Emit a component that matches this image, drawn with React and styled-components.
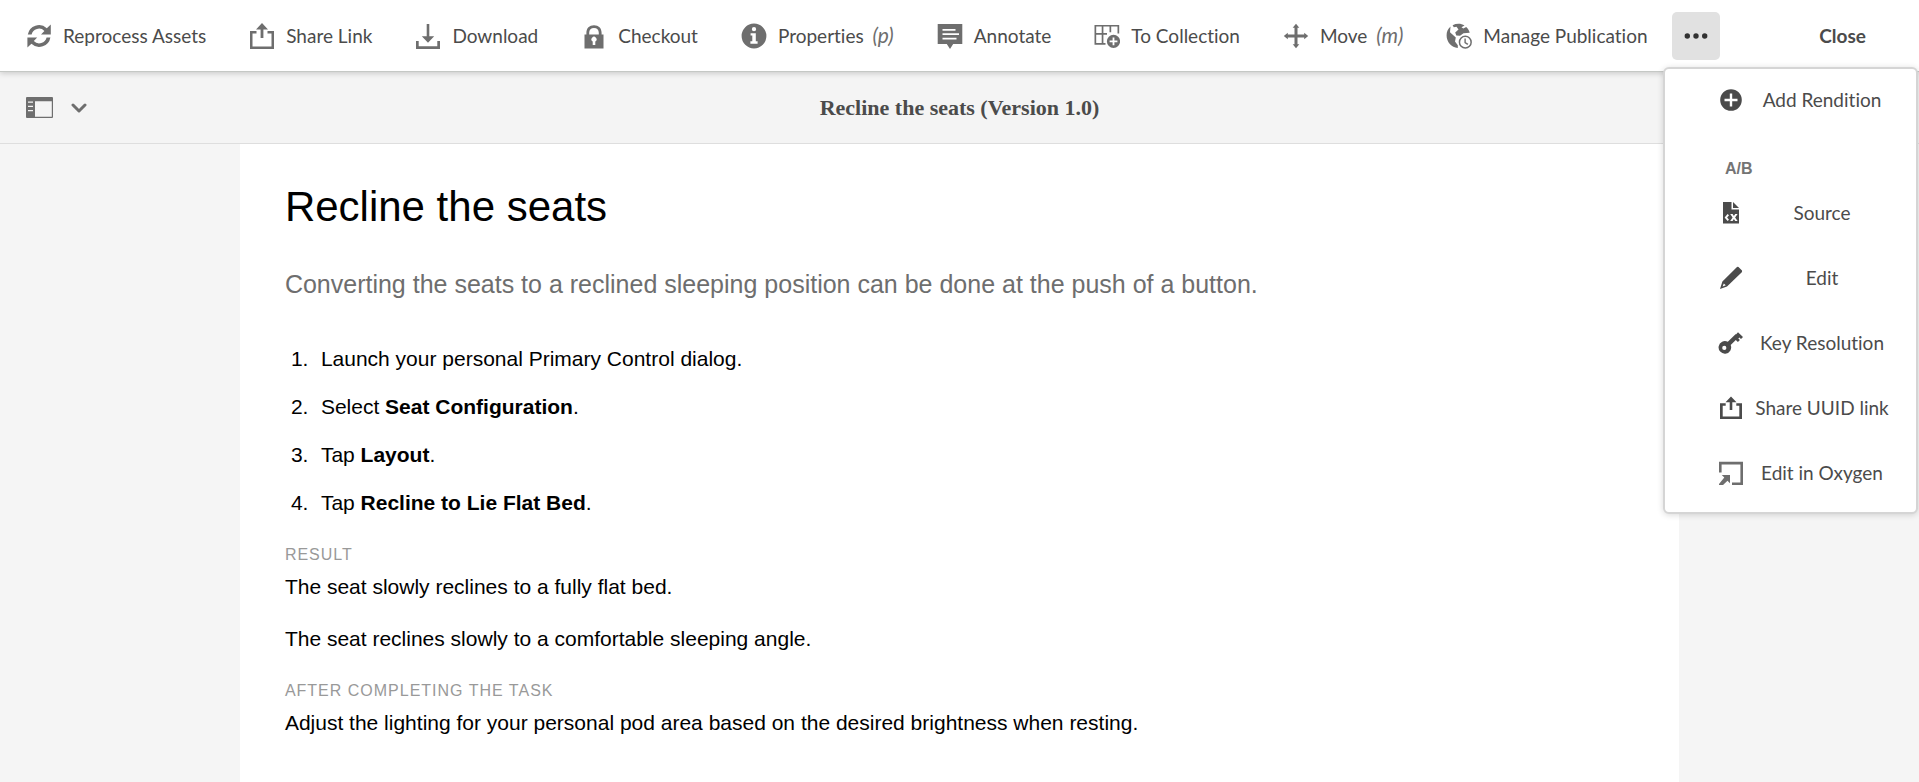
import React from "react";
import styled, { createGlobalStyle } from "styled-components";

const GlobalStyle = createGlobalStyle`
  * { box-sizing: border-box; }
  html, body, #root { min-height: 100vh; }
  body { margin: 0; background: #f5f5f5; font-family: Lato, "Liberation Sans", sans-serif; }
  #root { display: flex; flex-direction: column; }
`;

const Toolbar = styled.header`
  position: relative;
  z-index: 2;
  display: flex;
  align-items: center;
  height: 72px;
  padding: 0 45px 0 26px;
  background: #fff;
  border-bottom: 1px solid #c5c8c5;
  box-shadow: 0 1px 6px rgba(0, 0, 0, 0.2);
`;

const Actions = styled.nav`
  display: flex;
  align-items: center;
  gap: 43px;
`;

const Action = styled.button`
  display: flex;
  align-items: center;
  gap: 11px;
  padding: 0;
  border: 0;
  background: none;
  color: #4b4b4b;
  font: 400 19px/24px Lato, "Liberation Sans", sans-serif;
  font-variant-ligatures: none;
  white-space: nowrap;
  cursor: pointer;
`;

const Glyph = styled.svg`
  flex: none;
  width: 26px;
  height: 26px;
  fill: ${(p) => (p.$dark ? "#4b4b4b" : "#6e6e6e")};
  stroke: none;
`;

const Shortcut = styled.em`
  margin-left: 4px;
  color: #6e6e6e;
  font-size: 21px;
`;

const MoreButton = styled.button`
  display: grid;
  place-items: center;
  width: 48px;
  height: 48px;
  margin-left: 24px;
  padding: 0;
  border: 0;
  border-radius: 5px;
  background: #e1e1e1;
  cursor: pointer;
`;

const CloseButton = styled.button`
  margin-left: auto;
  padding: 8px;
  border: 0;
  background: none;
  color: #4b4b4b;
  font: 700 19px/24px Lato, "Liberation Sans", sans-serif;
  cursor: pointer;
`;

const Menu = styled.ul`
  position: absolute;
  top: 67px;
  right: 1px;
  display: grid;
  gap: 5px;
  width: 255px;
  margin: 0;
  padding: 1px 0 9px;
  list-style: none;
  background: #fff;
  border: 2px solid #d5d5d5;
  border-radius: 6px;
  box-shadow: 0 1px 6px rgba(0, 0, 0, 0.15);
`;

const MenuButton = styled.button`
  display: flex;
  align-items: center;
  gap: 9px;
  width: 100%;
  height: 60px;
  padding: 0 25px 0 53px;
  border: 0;
  background: none;
  color: #4b4b4b;
  font: 400 19px/24px Lato, "Liberation Sans", sans-serif;
  font-variant-ligatures: none;
  white-space: nowrap;
  cursor: pointer;
`;

const MenuLabel = styled.span`
  flex: 1;
  display: flex;
  justify-content: center;
`;

const MenuHeading = styled.li`
  height: 43px;
  padding: 26px 0 0 60px;
  color: #747474;
  font: 700 16px/16px "Liberation Sans", Arial, sans-serif;
`;

const TitleBar = styled.div`
  display: grid;
  grid-template-columns: 1fr auto 1fr;
  align-items: center;
  height: 72px;
  padding: 0 26px;
  background: #f4f4f4;
  border-bottom: 1px solid #dedede;
`;

const RailToggle = styled.button`
  justify-self: start;
  display: flex;
  align-items: center;
  gap: 17px;
  padding: 0;
  border: 0;
  background: none;
  cursor: pointer;
`;

const BarTitle = styled.h1`
  margin: 0;
  color: #4b4b4b;
  font: 700 22px/28px "Liberation Serif", "Times New Roman", serif;
`;

const Sheet = styled.main`
  flex: 1;
  width: 75%;
  margin: 0 auto;
  padding: 39px 45px 40px;
  background: #fff;
  color: #000;
  font: 400 21px/24px "Liberation Sans", Arial, sans-serif;
`;

const Title = styled.h2`
  margin: 0;
  font-size: 42px;
  font-weight: 400;
  line-height: 48px;
`;

const Lead = styled.p`
  margin: 38px 0 0;
  color: #6e6e6e;
  font-size: 25px;
  line-height: 30px;
`;

const Steps = styled.ol`
  display: grid;
  gap: 24px;
  margin: 48px 0 0;
  padding-left: 6px;
  list-style: none;
  counter-reset: step;
`;

const Step = styled.li`
  counter-increment: step;

  &::before {
    content: counter(step) ".";
    display: inline-block;
    width: 30px;
  }
`;

const Label = styled.h3`
  margin: 28px 0 0;
  color: #999;
  font-size: 16px;
  font-weight: 400;
  line-height: 24px;
  letter-spacing: 1px;
  text-transform: uppercase;
`;

const Paragraph = styled.p`
  margin: 8px 0 28px;
`;

const icons = {
  refresh: (
    <>
      <path d="M1.8 11.5A11.4 11.4 0 0 1 20.8 5.2L24.8 1.6V11.5H15L18.4 7.9A7.6 7.6 0 0 0 5.6 11.5Z" />
      <path d="M24.4 14.5A11.4 11.4 0 0 1 5.4 20.8L1.4 24.4V14.5H11.2L7.8 18.1A7.6 7.6 0 0 0 20.6 14.5Z" />
    </>
  ),
  share: (
    <path d="M13 0 19 6.4H14.4V15H11.6V6.4H7ZM1 8H7.5V10.5H3.5V23.5H22.5V10.5H18.5V8H25V26H1Z" />
  ),
  download: (
    <path d="M11.7 1H14.3V13.2H19.2L13 19.8 6.8 13.2H11.7ZM1 18H3.7V23.2H22.3V18H25V26H1Z" />
  ),
  lock: (
    <path
      fillRule="evenodd"
      d="M3.5 11.5H5.4V9.8C5.4 5 8.4 2.2 13 2.2S20.6 5 20.6 9.8V11.5H22.5V25.5H3.5ZM8.2 11.5H17.8V9.8C17.8 6.6 16 5 13 5S8.2 6.6 8.2 9.8ZM11.7 18.4V22H14.3V18.4A2.5 2.5 0 1 0 11.7 18.4Z"
    />
  ),
  info: (
    <path
      fillRule="evenodd"
      d="M13 .6A12.4 12.4 0 1 0 13 25.4 12.4 12.4 0 0 0 13 .6ZM13 4A2.1 2.1 0 1 1 13 8.3 2.1 2.1 0 0 1 13 4ZM9.6 10.2H14.8V18.3H16.6V20.8H9.4V18.3H11.3V12.6H9.6Z"
    />
  ),
  annotate: (
    <path
      fillRule="evenodd"
      d="M.7 1H25.3V21H16.2L13 26 9.8 21H.7ZM5.5 6V7.7H18.5V6ZM5.5 10.3V12H22V10.3ZM5.5 14.7V16.4H19.5V14.7Z"
    />
  ),
  collection: (
    <>
      <path
        fillRule="evenodd"
        d="M.5 2H25.2V10.5H23.5V3.6H17.2V9.3H15.5V3.6H9.4V10H13V11.7H9.4V20H11.5V21.8H.5ZM2.2 3.6V10H7.7V3.6ZM2.2 11.7V20H7.7V11.7Z"
      />
      <path
        fillRule="evenodd"
        d="M19.5 11.8A6.6 6.6 0 1 0 19.5 25 6.6 6.6 0 0 0 19.5 11.8ZM18.6 14.5H20.4V17.5H23.4V19.3H20.4V22.3H18.6V19.3H15.6V17.5H18.6Z"
      />
    </>
  ),
  move: (
    <path d="M13 .8 16.3 4.8H14.5V11.5H21.2V9.7L25.2 13 21.2 16.3V14.5H14.5V21.2H16.3L13 25.2 9.7 21.2H11.5V14.5H4.8V16.3L.8 13 4.8 9.7V11.5H11.5V4.8H9.7Z" />
  ),
  publish: (
    <>
      <path d="M4.5 3.6C1.8 6 .6 9 .6 12.5.6 19 5.4 24.4 11.8 25V22.2L9 18.5 9.8 14.5 4 9.2Z" />
      <path d="M6.6 2.3C10.6.3 15 .4 18.5 2.5L15.5 4.2 17.3 5.5 20.2 3.9C22 5.7 23.3 7.6 23.7 9.8L17.5 10.2 14 12.8 10.3 12.5 9.2 9.5 12.5 6.5 10.5 3.8 7.8 4.2Z" />
      <path
        fillRule="evenodd"
        d="M19.3 12.6A6.6 6.6 0 1 0 19.3 25.8 6.6 6.6 0 0 0 19.3 12.6ZM19.3 14.1A5.1 5.1 0 1 1 19.3 24.3 5.1 5.1 0 0 1 19.3 14.1ZM18.4 15.5V20L21.4 22 22.3 20.8 19.8 19.2V15.5Z"
      />
    </>
  ),
  add: (
    <path
      fillRule="evenodd"
      d="M13 2.2A10.8 10.8 0 1 0 13 23.8 10.8 10.8 0 0 0 13 2.2ZM11.8 6.5H14.2V11.8H19.5V14.2H14.2V19.5H11.8V14.2H6.5V11.8H11.8Z"
    />
  ),
  source: (
    <>
      <path
        fillRule="evenodd"
        d="M5 2H13.5V9.5H21V23.5H5ZM9.6 14 6.6 17.5 9.6 21 11 19.8 9.1 17.5 11 15.2ZM12.2 14 14.6 17.5 12.2 21H14.6L15.9 19.1 17.2 21H19.6L17.1 17.5 19.6 14H17.2L15.9 15.9 14.6 14Z"
      />
      <path d="M15 2 21 8H15Z" />
    </>
  ),
  edit: (
    <path
      fillRule="evenodd"
      d="M19 2Q19.8 1.6 20.5 2L24 5.6Q24.3 6.4 23.8 7.2L9 21.6 2 24 4.4 16.6ZM5.8 18.4 4.6 21.4 7.8 20.3Z"
    />
  ),
  key: (
    <path
      fillRule="evenodd"
      d="M20 2.2 25 7 23 9 21.4 7.4 20.3 8.5 21.9 10.1 19.9 12 17.8 10.1 12.7 15A6.3 6.3 0 1 1 9.8 11.8L17.5 4.2H18.2ZM6.3 15.8A2.1 2.1 0 1 0 6.3 20 2.1 2.1 0 0 0 6.3 15.8Z"
    />
  ),
  shareSmall: (
    <path d="M13 1.5 18.5 7.2H14.3V15H11.7V7.2H7.5ZM2 8.2H7.7V10.7H4.7V21.4H21.3V10.7H18.3V8.2H24V24H2Z" />
  ),
  oxygen: (
    <>
      <path d="M1 1.8H25V25H14V22.5H22.4V4.4H3.6V12.5H1Z" />
      <path d="M3.8 15H12V23.2L9.5 20.7 5 25H1V24L6.3 17.5Z" />
    </>
  ),
};

function Icon({ name, dark }) {
  return (
    <Glyph viewBox="0 0 26 26" aria-hidden="true" $dark={dark}>
      {icons[name]}
    </Glyph>
  );
}

const actions = [
  { icon: "refresh", label: "Reprocess Assets" },
  { icon: "share", label: "Share Link" },
  { icon: "download", label: "Download" },
  { icon: "lock", label: "Checkout" },
  { icon: "info", label: "Properties", shortcut: "(p)" },
  { icon: "annotate", label: "Annotate" },
  { icon: "collection", label: "To Collection" },
  { icon: "move", label: "Move", shortcut: "(m)" },
  { icon: "publish", label: "Manage Publication" },
];

const variants = [
  { icon: "source", label: "Source" },
  { icon: "edit", label: "Edit" },
  { icon: "key", label: "Key Resolution" },
  { icon: "shareSmall", label: "Share UUID link" },
  { icon: "oxygen", label: "Edit in Oxygen", light: true },
];

function MenuItem({ icon, label, light }) {
  return (
    <li>
      <MenuButton type="button">
        <Icon name={icon} dark={!light} />
        <MenuLabel>{label}</MenuLabel>
      </MenuButton>
    </li>
  );
}

export default function App() {
  return (
    <>
      <GlobalStyle />
      <Toolbar>
        <Actions aria-label="Asset actions">
          {actions.map(({ icon, label, shortcut }) => (
            <Action type="button" key={label}>
              <Icon name={icon} />
              <span>
                {label} {shortcut && <Shortcut>{shortcut}</Shortcut>}
              </span>
            </Action>
          ))}
        </Actions>
        <MoreButton type="button" aria-label="More actions" aria-expanded="true">
          <svg width="24" height="6" viewBox="0 0 24 6" fill="#323232" aria-hidden="true">
            <circle cx="3.3" cy="3" r="2.7" />
            <circle cx="12" cy="3" r="2.7" />
            <circle cx="20.7" cy="3" r="2.7" />
          </svg>
        </MoreButton>
        <CloseButton type="button">Close</CloseButton>
        <Menu>
          <MenuItem icon="add" label="Add Rendition" />
          <MenuHeading>A/B</MenuHeading>
          {variants.map((item) => (
            <MenuItem key={item.label} {...item} />
          ))}
        </Menu>
      </Toolbar>
      <TitleBar>
        <RailToggle type="button" aria-label="Toggle side panel">
          <svg width="28" height="22" viewBox="0 0 28 22" fill="#6e6e6e" aria-hidden="true">
            <path
              fillRule="evenodd"
              d="M1 0H26Q27 0 27 1V20Q27 21 26 21H1Q0 21 0 20V1Q0 0 1 0ZM9 4.3V19.7H25.8V4.3ZM2 4.5V5.7H7V4.5ZM2 8.8V10H7V8.8ZM2 13V14.2H7V13Z"
            />
          </svg>
          <svg width="16" height="10" viewBox="0 0 16 10" fill="none" stroke="#6e6e6e" strokeWidth="3" strokeLinecap="round" strokeLinejoin="round" aria-hidden="true">
            <path d="M2 2 8 8 14 2" />
          </svg>
        </RailToggle>
        <BarTitle>Recline the seats (Version 1.0)</BarTitle>
      </TitleBar>
      <Sheet>
        <Title>Recline the seats</Title>
        <Lead>
          Converting the seats to a reclined sleeping position can be done at the push of a button.
        </Lead>
        <Steps>
          <Step>Launch your personal Primary Control dialog.</Step>
          <Step>Select <b>Seat Configuration</b>.</Step>
          <Step>Tap <b>Layout</b>.</Step>
          <Step>Tap <b>Recline to Lie Flat Bed</b>.</Step>
        </Steps>
        <Label>Result</Label>
        <Paragraph>The seat slowly reclines to a fully flat bed.</Paragraph>
        <Paragraph>The seat reclines slowly to a comfortable sleeping angle.</Paragraph>
        <Label>After completing the task</Label>
        <Paragraph>
          Adjust the lighting for your personal pod area based on the desired brightness when resting.
        </Paragraph>
      </Sheet>
    </>
  );
}
